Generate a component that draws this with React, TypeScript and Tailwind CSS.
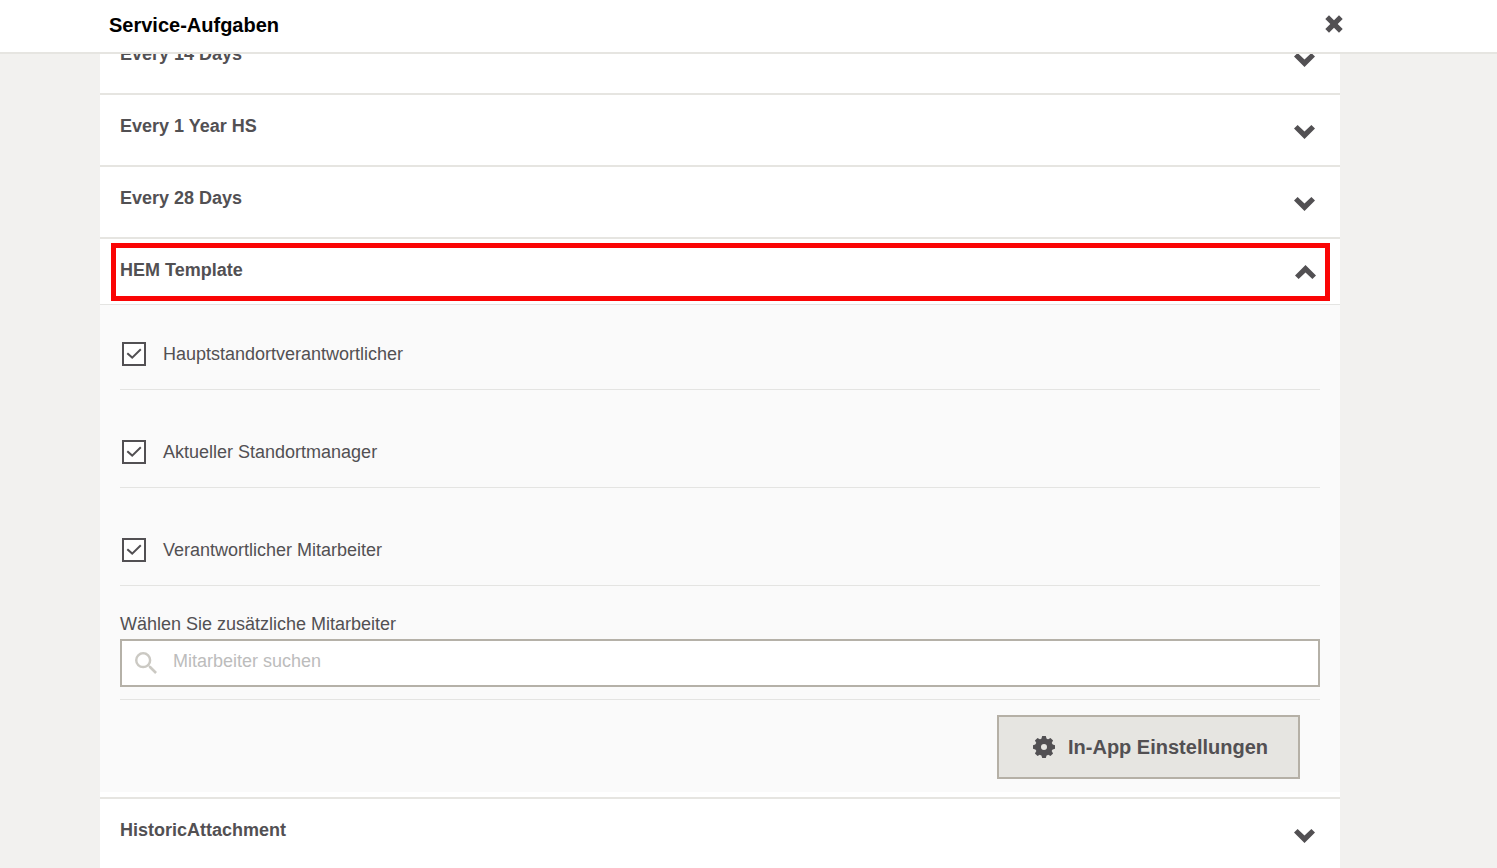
import { useState } from "react";

function Chevron({ up = false }: { up?: boolean }) {
  return (
    <svg width="21" height="14" viewBox="0 0 21 14" fill="currentColor" aria-hidden="true">
      {up ? (
        <path d="M10.5 0 21 10.4 17.4 14 10.5 7.6 3.6 14 0 10.4Z" />
      ) : (
        <path d="M10.5 14 0 3.6 3.6 0l6.9 6.4L17.4 0 21 3.6Z" />
      )}
    </svg>
  );
}

function CloseIcon() {
  return (
    <svg width="18" height="18" viewBox="0 0 18 18" fill="currentColor" aria-hidden="true">
      <path d="M4 .3 9 5.3l5-5L17.7 4l-5 5 5 5-3.7 3.7-5-5-5 5L.3 14l5-5-5-5Z" />
    </svg>
  );
}

function SearchIcon() {
  return (
    <svg width="22" height="22" viewBox="3 3 17.5 17.5" fill="currentColor" aria-hidden="true">
      <path d="M15.5 14h-.79l-.28-.27A6.47 6.47 0 0 0 16 9.5 6.5 6.5 0 1 0 9.5 16c1.61 0 3.09-.59 4.23-1.57l.27.28v.79l5 4.99L20.49 19l-4.99-5zm-6 0C7.01 14 5 11.99 5 9.5S7.01 5 9.5 5 14 7.01 14 9.5 11.99 14 9.5 14z" />
    </svg>
  );
}

const teeth = [0, 45, 90, 135, 180, 225, 270, 315];

function GearIcon() {
  return (
    <svg width="22" height="22" viewBox="-11 -11 22 22" fill="currentColor" aria-hidden="true">
      <path
        fillRule="evenodd"
        d="M0-8.8A8.8 8.8 0 1 1 0 8.8 8.8 8.8 0 1 1 0-8.8ZM0-3A3 3 0 1 0 0 3 3 3 0 1 0 0-3Z"
      />
      {teeth.map((angle) => (
        <path key={angle} d="M-2.7-8-1.8-11H1.8L2.7-8Z" transform={`rotate(${angle})`} />
      ))}
    </svg>
  );
}

function CheckRow({ id, label, first = false }: { id: string; label: string; first?: boolean }) {
  return (
    <div
      className={`flex items-center border-b border-[#e4e4e2] pb-[23px] pl-0.5 ${first ? "pt-[37px]" : "pt-[50px]"}`}
    >
      <span className="grid size-6 shrink-0">
        <input
          id={id}
          type="checkbox"
          defaultChecked
          className="peer col-start-1 row-start-1 size-6 appearance-none border-2 border-[#525053] bg-white"
        />
        <svg
          viewBox="0 0 24 24"
          fill="none"
          stroke="currentColor"
          strokeWidth="2"
          aria-hidden="true"
          className="pointer-events-none invisible col-start-1 row-start-1 size-6 peer-checked:visible"
        >
          <path d="M5.3 11.2 10.2 15.6 18.8 7.3" />
        </svg>
      </span>
      <label htmlFor={id} className="pl-[17px] leading-6">
        {label}
      </label>
    </div>
  );
}

function TemplateSettings() {
  return (
    <div className="bg-[#fafafa] px-5 pb-[13px]">
      <CheckRow id="main-responsible" label="Hauptstandortverantwortlicher" first />
      <CheckRow id="current-manager" label="Aktueller Standortmanager" />
      <CheckRow id="responsible-employee" label="Verantwortlicher Mitarbeiter" />
      <div className="border-b border-[#e4e4e2] pt-[26px] pb-3">
        <label htmlFor="employee-search" className="block leading-6">
          Wählen Sie zusätzliche Mitarbeiter
        </label>
        <div className="mt-[3px] flex h-12 items-center border-2 border-[#b5b1a8] bg-white pl-[13px]">
          <span className="text-[#cbc9c3]">
            <SearchIcon />
          </span>
          <input
            id="employee-search"
            type="text"
            placeholder="Mitarbeiter suchen"
            className="h-full min-w-0 flex-1 bg-transparent pr-4 pb-1 pl-4 outline-none placeholder:text-[#bcbcbc]"
          />
        </div>
      </div>
      <div className="flex justify-end pt-[15px] pr-5">
        <button
          type="button"
          className="flex h-16 items-center gap-[13px] border-2 border-[#b5b0a6] bg-[#e6e5e1] pr-[30px] pl-[34px] text-[20px] leading-7 font-bold"
        >
          <GearIcon />
          In-App Einstellungen
        </button>
      </div>
    </div>
  );
}

const templates = [
  "Every 14 Days",
  "Every 1 Year HS",
  "Every 28 Days",
  "HEM Template",
  "HistoricAttachment",
];

export default function App() {
  const [open, setOpen] = useState("HEM Template");

  return (
    <div className="flex h-screen flex-col overflow-hidden bg-[#f2f1ef] font-['Liberation_Sans',Arial,sans-serif] text-[18px] text-[#525053]">
      <header className="shrink-0 border-b-2 border-[#e6e5e1] bg-white">
        <div className="flex h-[52px] max-w-[1440px] items-start justify-between pr-[97px] pl-[109px]">
          <h1 className="pt-[11px] text-[20px] leading-7 font-bold text-black">Service-Aufgaben</h1>
          <button type="button" aria-label="Schließen" className="pt-[15px]">
            <CloseIcon />
          </button>
        </div>
      </header>
      <main className="min-h-0 max-w-[1440px] flex-1 overflow-hidden px-[100px]">
        <div className="-mt-[31px] bg-white">
          {templates.map((name) => {
            const isOpen = name === open;
            return (
              <section
                key={name}
                className={`border-b-2 border-[#e6e5e1] ${isOpen ? "pb-[5px]" : ""}`}
              >
                <h2 className={isOpen ? "relative border-b border-[#e4e4e2]" : ""}>
                  <button
                    type="button"
                    aria-expanded={isOpen}
                    onClick={() => setOpen(isOpen ? "" : name)}
                    className={`flex w-full items-start justify-between pl-5 text-left font-bold ${isOpen ? "h-[65px] pr-6" : "h-[70px] pr-[25px]"}`}
                  >
                    <span className="pt-[19px] leading-6">{name}</span>
                    <span className={isOpen ? "pt-[26px]" : "pt-[30px]"}>
                      <Chevron up={isOpen} />
                    </span>
                  </button>
                  {isOpen && (
                    <span className="pointer-events-none absolute top-1 right-2.5 bottom-[3px] left-[11px] border-5 border-[#fa0505]" />
                  )}
                </h2>
                {isOpen && <TemplateSettings />}
              </section>
            );
          })}
        </div>
      </main>
    </div>
  );
}
